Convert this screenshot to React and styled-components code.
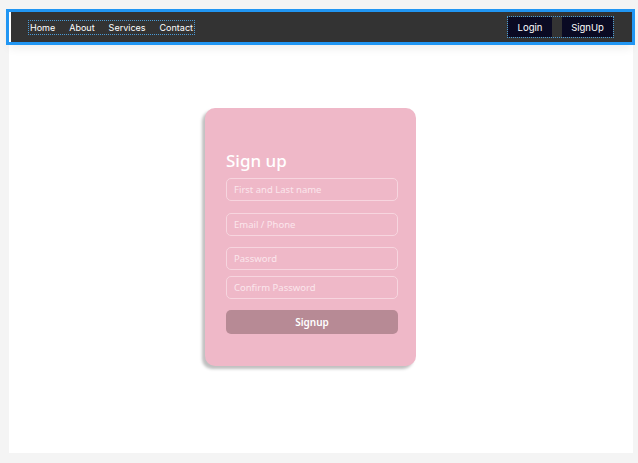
import React from "react";
import styled, { createGlobalStyle } from "styled-components";

const GlobalStyle = createGlobalStyle`
  html, body {
    margin: 0;
    padding: 0;
    background: #f4f4f4;
  }
  body {
    font-family: Inter, "Liberation Sans", sans-serif;
  }
`;

const Page = styled.div`
  height: 463px;
  box-sizing: border-box;
  padding: 12px 5px 10px 9px;
  background: #f4f4f4;
`;

const Container = styled.div`
  height: 100%;
  background: #ffffff;
  display: flex;
  flex-direction: column;
`;

const Navbar = styled.nav`
  width: 623px;
  height: 30px;
  box-sizing: border-box;
  background: #333333;
  border-left: 2px solid #ffffff;
  outline: 3px solid #2196f3;
  display: flex;
  align-items: center;
  justify-content: space-between;
  padding: 0 19px 0 19px;
  box-shadow: 0 6px 10px rgba(0, 0, 0, 0.08);
`;

const Links = styled.ul`
  list-style: none;
  margin: 0;
  padding: 0;
  display: flex;
  gap: 14px;
  outline: 1px dotted #4a9bd6;
  outline-offset: 1px;
`;

const LinkItem = styled.li`
  font-size: 9px;
  color: #ffffff;
  line-height: 11px;
`;

const Actions = styled.div`
  display: flex;
  gap: 10px;
  outline: 1px dotted #4a9bd6;
`;

const NavButton = styled.button`
  background: #0a0a23;
  color: #ffffff;
  border: none;
  font-family: Inter, "Liberation Sans", sans-serif;
  font-size: 9.5px;
  height: 20px;
  padding: 0;
  width: ${(p) => p.$w}px;
`;

const Main = styled.main`
  flex: 1;
  display: flex;
  justify-content: center;
  padding-top: 66px;
  padding-right: 21px;
`;

const Card = styled.form`
  width: 211px;
  height: 258px;
  box-sizing: border-box;
  background: #efb8c8;
  border-radius: 10px;
  box-shadow: -3px 3px 3px rgba(0, 0, 0, 0.25);
  padding: 42px 18px 0 21px;
  display: flex;
  flex-direction: column;
  font-family: "Noto Sans", "Open Sans", sans-serif;
`;

const Title = styled.h2`
  margin: 0 0 6px;
  color: #ffffff;
  font-size: 17px;
  font-weight: 500;
  line-height: 22px;
`;

const Input = styled.input`
  height: 23px;
  box-sizing: border-box;
  margin: 0 0 ${(p) => p.$gap}px;
  padding: 0 7px;
  border: 1px solid #f7d5df;
  border-radius: 5px;
  background: transparent;
  font-family: "Noto Sans", "Open Sans", sans-serif;
  font-size: 9.5px;
  color: #ffffff;
  &::placeholder {
    color: #fbe6ec;
  }
`;

const SubmitButton = styled.button`
  height: 24px;
  border: none;
  border-radius: 5px;
  background: #b78a95;
  color: #ffffff;
  font-family: "Noto Sans", "Open Sans", sans-serif;
  font-size: 10px;
  font-weight: 600;
`;

export default function App() {
  return (
    <>
      <GlobalStyle />
      <Page>
        <Container>
          <Navbar>
            <Links>
              <LinkItem>Home</LinkItem>
              <LinkItem>About</LinkItem>
              <LinkItem>Services</LinkItem>
              <LinkItem>Contact</LinkItem>
            </Links>
            <Actions>
              <NavButton $w={44}>Login</NavButton>
              <NavButton $w={51}>SignUp</NavButton>
            </Actions>
          </Navbar>
          <Main>
            <Card onSubmit={(e) => e.preventDefault()}>
              <Title>Sign up</Title>
              <Input $gap={12} placeholder="First and Last name" />
              <Input $gap={11} placeholder="Email / Phone" />
              <Input $gap={6} placeholder="Password" />
              <Input $gap={11} placeholder="Confirm Password" />
              <SubmitButton type="submit">Signup</SubmitButton>
            </Card>
          </Main>
        </Container>
      </Page>
    </>
  );
}
